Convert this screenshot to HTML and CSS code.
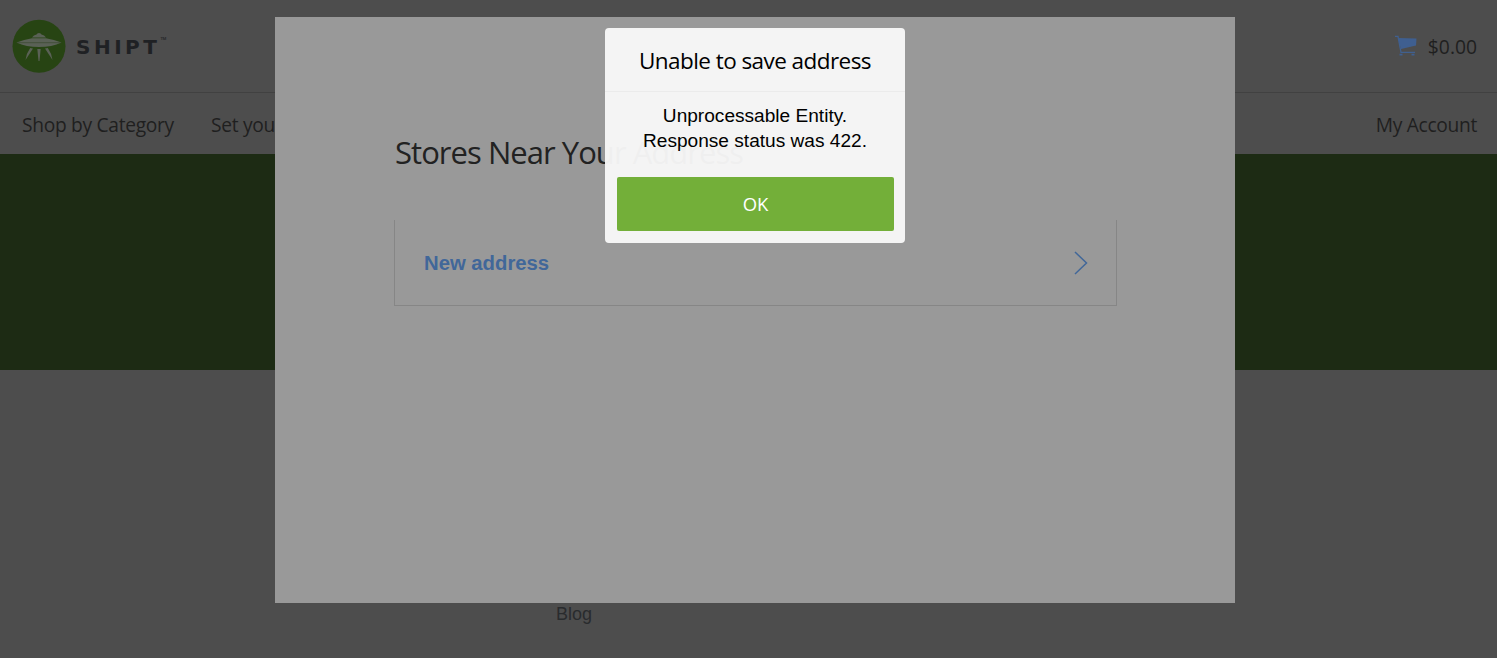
FILE: index.html
```html
<!DOCTYPE html>
<html lang="en">
<head>
<meta charset="utf-8">
<title>Shipt</title>
<link rel="stylesheet" href="styles.css">
</head>
<body>
<div class="page">
  <header class="header">
    <div class="brand">
      <svg class="brand-mark" viewBox="0 0 54 54" aria-hidden="true">
        <circle cx="27" cy="27.3" r="26.5" fill="#274413"/>
        <g fill="#5a6156">
          <path d="M20 18.500Q21.500 16 24.500 15.500Q25 14 27 14Q29 14 29.500 15.500Q32.500 16 34 18.500Z"/>
          <path d="M4.500 23.500Q12 20.500 20 19.300H34Q42 20.500 49.500 23.500Q40 28 27 28Q14 28 4.500 23.500Z"/>
          <path d="M18.200 29l2.800 .500-7.500 11.500q1-7 4.700-12zM25.300 30h3.400L27.500 42h-1zM33 29.500l2.800-.500q3.700 5 4.700 12z"/>
        </g>
        <path d="M5 23.700H49" fill="none" stroke="#3c4c33" stroke-width=".8"/>
      </svg>
      <span class="brand-name">SHIPT</span><span class="brand-tm">TM</span>
    </div>
    <div class="cart">
      <svg class="cart-icon" viewBox="0 0 22 21" aria-hidden="true">
        <path d="M0 1.300H3L6 17.300H20" fill="none" stroke="#40608f" stroke-width="1.300"/>
        <path d="M3 3L21.500 3.500L21 10.500L6 14Z" fill="#3f5f90"/>
        <path d="M4.500 18.800h3v1.800h-3zM16.500 18.800h3v1.800h-3z" fill="#3f5f90"/>
      </svg>
      <span class="cart-total">$0.00</span>
    </div>
  </header>
  <nav class="nav">
    <span class="nav-category">Shop by Category</span>
    <span class="nav-store">Set your store</span>
    <span class="nav-account">My Account</span>
  </nav>
  <div class="hero"></div>
  <footer class="footer"><span class="footer-link">Blog</span></footer>
</div>

<section class="sheet">
  <h1 class="sheet-title"><span>Stores Near Your Address</span></h1>
  <div class="address">
    <span class="address-label">New address</span>
    <svg class="chevron" viewBox="0 0 14 24" aria-hidden="true"><path d="M1 1L12.500 12L1 23" fill="none" stroke="#416799" stroke-width="1.500"/></svg>
  </div>
</section>

<div class="dialog" role="alertdialog">
  <div class="dialog-head"><span class="dialog-title">Unable to save address</span></div>
  <div class="dialog-text"><span>Unprocessable Entity.</span><br><span>Response status was 422.</span></div>
  <button class="dialog-ok" type="button">OK</button>
</div>
</body>
</html>
```

FILE: styles.css
```css
* { box-sizing: border-box; }
body {
  margin: 0;
  width: 1497px;
  height: 658px;
  overflow: hidden;
  position: relative;
  background: #4d4d4d;
  color: #1f1f1f;
  font-family: "Open Sans", "Noto Sans", sans-serif;
}
.page { display: flex; flex-direction: column; height: 658px; }
.header {
  display: flex;
  justify-content: space-between;
  align-items: center;
  height: 93px;
  padding: 0 20px 0 12px;
  border-bottom: 1px solid #414141;
}
.brand { display: flex; align-items: center; }
.brand-mark { width: 54px; height: 54px; }
.brand-name {
  margin-left: 10px;
  padding-top: 2px;
  font: 700 20px/24px "DejaVu Sans", sans-serif;
  letter-spacing: 3.500px;
  color: #1f2124;
}
.brand-tm { margin: -14px 0 0 0; font: 700 4px/6px Roboto, sans-serif; color: #292a2c; }
.cart { display: flex; align-items: center; gap: 11px; }
.cart-icon { width: 22px; height: 21px; margin-top: -2px; }
.cart-total { padding-top: 1px; font-size: 19.300px; line-height: 26px; }
.nav { display: flex; align-items: center; height: 61px; padding: 1px 20px 0 22px; font-size: 19.200px; letter-spacing: -.300px; white-space: nowrap; }
.nav-category { width: 189px; }
.nav-account { margin-left: auto; }
.hero { height: 216px; background: #1d2b14; }
.footer { padding: 233px 0 0 556px; font: 18px/22px "Liberation Sans", Arial, sans-serif; color: #292b2d; }
.sheet {
  position: absolute;
  left: 275px;
  top: 17px;
  width: 960px;
  height: 586px;
  padding: 112px 118px 0 119px;
  background: #999;
}
.sheet-title { margin: 0 0 44px 1px; font-size: 31px; line-height: 47px; font-weight: 400; letter-spacing: -.960px; white-space: nowrap; color: #222; }
.address {
  display: flex;
  align-items: center;
  justify-content: space-between;
  height: 86px;
  padding: 0 28px 0 29px;
  border: 1px solid #868686;
  border-top: 0;
}
.address-label { font: 700 20.300px/26px "Liberation Sans", Arial, sans-serif; color: #416799; }
.chevron { width: 14px; height: 24px; }
.dialog {
  position: absolute;
  left: 605px;
  top: 28px;
  width: 300px;
  height: 215px;
  border-radius: 4px;
  background: rgba(248, 248, 248, .96);
  color: #000;
  text-align: center;
}
.dialog-head { height: 64px; padding-top: 2px; border-bottom: 1px solid #ebebeb; font-size: 22.500px; line-height: 62px; letter-spacing: -.560px; white-space: nowrap; }
.dialog-text { height: 85px; padding-top: 11px; font: 19.100px/25px "Liberation Sans", Arial, sans-serif; }
.dialog-ok {
  display: block;
  width: 277px;
  height: 54px;
  margin: 0 0 0 12px;
  padding: 0;
  border: 0;
  border-radius: 2px;
  background: #73af39;
  color: #fff;
  font: 18.500px/54px "Open Sans", "Noto Sans", sans-serif;
}
```
